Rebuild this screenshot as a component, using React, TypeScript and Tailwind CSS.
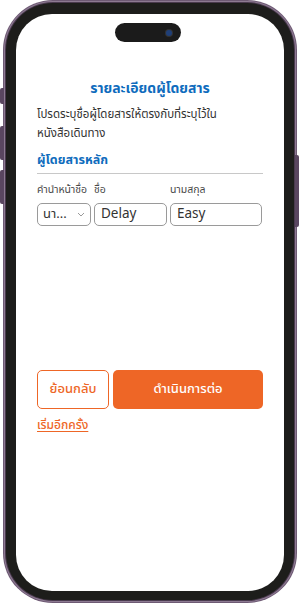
import React from "react";

const thai = { fontFamily: '"Noto Sans Thai", "Noto Sans", "Liberation Sans", sans-serif' };

export default function App() {
  return (
    <div className="w-[300px] h-[605px] bg-white relative overflow-hidden" style={thai}>
      {/* side buttons */}
      <div className="absolute left-[0px] top-[88px] w-[4px] h-[16px] rounded-l-[2px] bg-[#5a4660]" />
      <div className="absolute left-[0px] top-[126px] w-[4px] h-[34px] rounded-l-[2px] bg-[#5a4660]" />
      <div className="absolute left-[0px] top-[170px] w-[4px] h-[34px] rounded-l-[2px] bg-[#5a4660]" />
      <div className="absolute right-[1px] top-[155px] w-[4px] h-[72px] rounded-r-[2px] bg-[#5a4660]" />

      <div className="mx-[3px] h-[603px] rounded-[50px] bg-[#6e5a74] p-[1px]">
        <div className="h-full rounded-[49px] bg-[#8d7a92] p-[1px]">
          <div className="h-full rounded-[48px] bg-[#4a3a4e] p-[1px]">
            <div className="h-full rounded-[47px] bg-[#1d1d1b] pt-[11px] pb-[9px] px-[10px]">
              <div className="relative h-full rounded-[36px] bg-white px-[21px] pt-[64px]">
                {/* dynamic island */}
                <div className="absolute left-[99px] top-[9px] w-[66px] h-[19px] rounded-full bg-[#1b1b1b] flex items-center justify-end pr-[9px]">
                  <div className="w-[6px] h-[6px] rounded-full bg-[#1f3f78] ring-1 ring-[#333]" />
                </div>

                <h1 className="text-center text-[14px] leading-[21px] font-bold text-[#0f6cbd]">
                  รายละเอียดผู้โดยสาร
                </h1>
                <p className="mt-[6px] text-[11.5px] leading-[19px] text-[#333]">
                  โปรดระบุชื่อผู้โดยสารให้ตรงกับที่ระบุไว้ใน หนังสือเดินทาง
                </p>
                <div className="mt-[9px] border-b-[1.5px] border-[#c8c8c8] pb-[3px]">
                  <h2 className="text-[12.5px] leading-[18px] font-bold text-[#0f6cbd]">ผู้โดยสารหลัก</h2>
                </div>

                <div className="mt-[8px] grid grid-cols-[54px_73px_92px] gap-x-[3px]">
                  <span className="text-[10.5px] leading-[16px] text-[#4a4a4a] whitespace-nowrap">คำนำหน้าชื่อ</span>
                  <span className="text-[10.5px] leading-[16px] text-[#4a4a4a]">ชื่อ</span>
                  <span className="text-[10.5px] leading-[16px] text-[#4a4a4a]">นามสกุล</span>

                  <div className="mt-[5px] h-[23px] rounded-[5px] border border-[#9a9a9a] flex items-center justify-between pl-[5px] pr-[5px]">
                    <span className="text-[13px] text-[#333]">นา...</span>
                    <svg width="8" height="5" viewBox="0 0 8 5" fill="none">
                      <path d="M1 1l3 3 3-3" stroke="#9a9a9a" strokeWidth="1" />
                    </svg>
                  </div>
                  <div className="mt-[5px] h-[23px] rounded-[5px] border border-[#9a9a9a] flex items-center pl-[6px]">
                    <span className="text-[13.5px] text-[#333]">Delay</span>
                  </div>
                  <div className="mt-[5px] h-[23px] rounded-[5px] border border-[#9a9a9a] flex items-center pl-[6px]">
                    <span className="text-[13.5px] text-[#333]">Easy</span>
                  </div>
                </div>

                <div className="mt-[144px] flex gap-[4px]">
                  <button className="w-[72px] h-[39px] rounded-[5px] border border-[#ee6626] bg-white text-[13px] text-[#ee6626] font-medium">
                    ย้อนกลับ
                  </button>
                  <button className="w-[150px] h-[39px] rounded-[5px] bg-[#ee6626] text-[13px] text-white font-medium">
                    ดำเนินการต่อ
                  </button>
                </div>
                <div className="mt-[8px] text-[12px] leading-[16px]">
                  <span className="font-medium text-[#ee6626] underline underline-offset-2">เริ่มอีกครั้ง</span>
                </div>
              </div>
            </div>
          </div>
        </div>
      </div>
    </div>
  );
}
